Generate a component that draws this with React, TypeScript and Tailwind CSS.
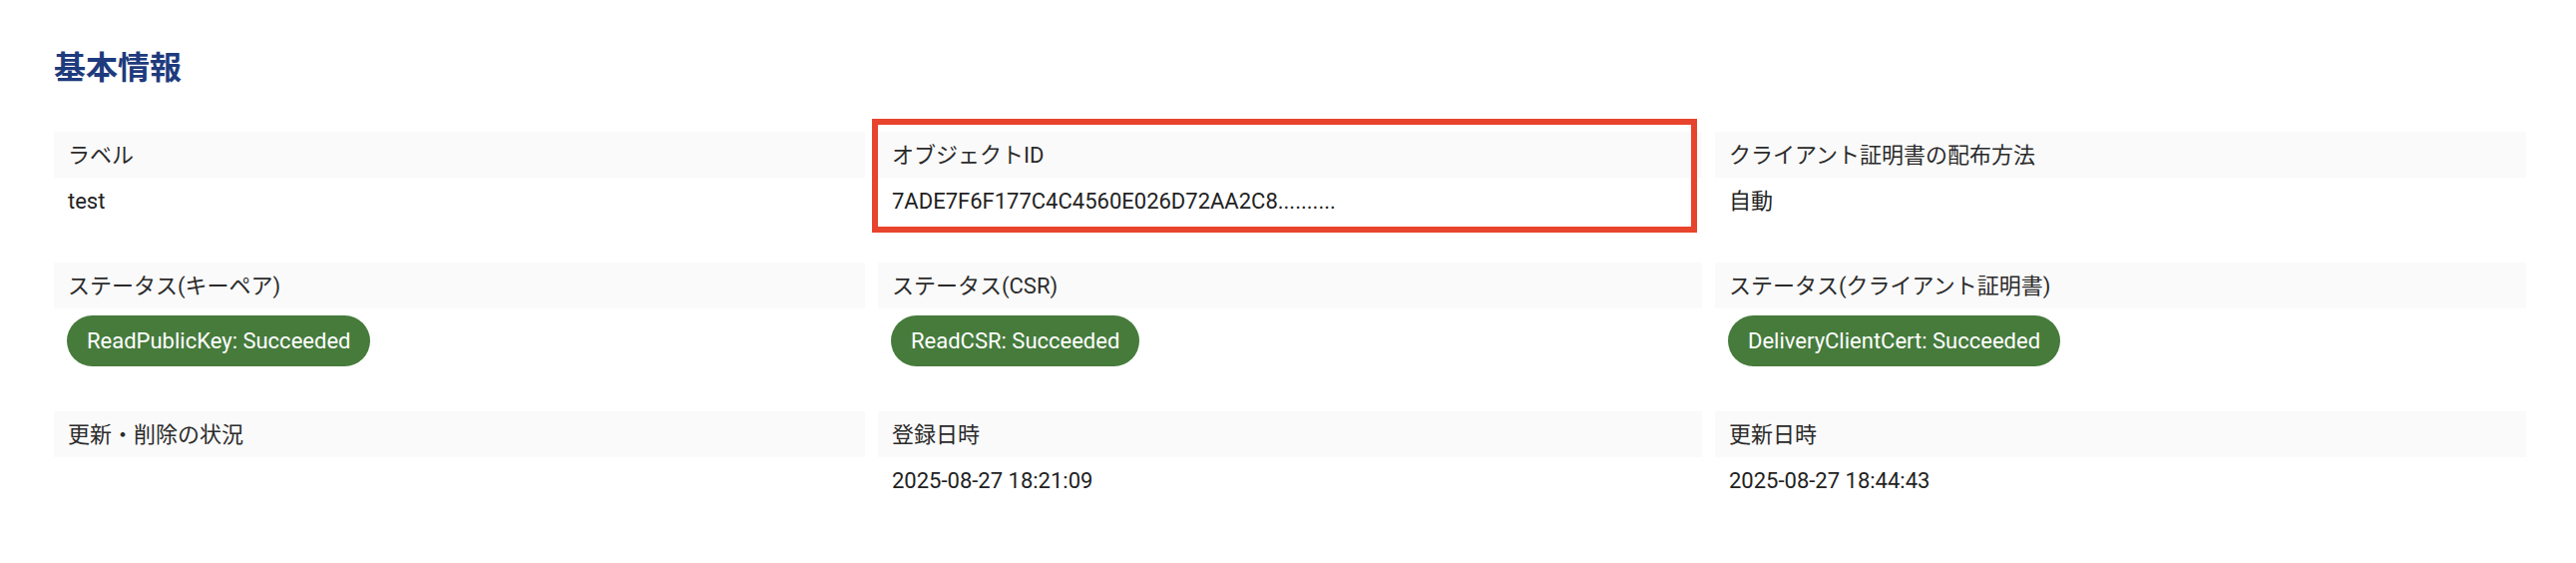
import React from 'react';

type Field = {
  label: string;
  value?: string;
  badge?: string;
  highlight?: boolean;
};

const fields: Field[] = [
  { label: 'ラベル', value: 'test' },
  { label: 'オブジェクトID', value: '7ADE7F6F177C4C4560E026D72AA2C8..........', highlight: true },
  { label: 'クライアント証明書の配布方法', value: '自動' },
  { label: 'ステータス(キーペア)', badge: 'ReadPublicKey: Succeeded' },
  { label: 'ステータス(CSR)', badge: 'ReadCSR: Succeeded' },
  { label: 'ステータス(クライアント証明書)', badge: 'DeliveryClientCert: Succeeded' },
  { label: '更新・削除の状況', value: '' },
  { label: '登録日時', value: '2025-08-27 18:21:09' },
  { label: '更新日時', value: '2025-08-27 18:44:43' },
];

const FieldItem: React.FC<{ field: Field }> = ({ field }) => (
  <div className="relative">
    <div className="flex h-[46px] items-center bg-[#fafafa] px-[14px] text-[22px] text-[#2b2b2b]">
      {field.label}
    </div>
    <div className="pt-[7px] px-[14px]">
      {field.badge ? (
        <span className="-ml-[1px] inline-flex h-[51px] items-center rounded-full bg-[#467b3c] px-[20px] text-[22px] text-white">
          {field.badge}
        </span>
      ) : (
        <div className="h-[33px] text-[22px] leading-[33px] text-[#222]">{field.value}</div>
      )}
    </div>
    {field.highlight && (
      <div className="pointer-events-none absolute -top-[13px] -left-[6px] right-[5px] -bottom-[15px] border-[6px] border-[#e8432d]" />
    )}
  </div>
);

export default function App() {
  return (
    <div
      className="min-h-[564px] w-full bg-white pl-[54px] pr-[50px] pt-[46px]"
      style={{ fontFamily: 'Roboto, "Noto Sans CJK JP", sans-serif' }}
    >
      <h1 className="h-[44px] text-[32px] font-bold leading-[44px] text-[#1e3b7d]">基本情報</h1>
      <div className="mt-[42px] grid grid-cols-[813fr_826fr_813fr] gap-x-[13px] gap-y-[45px]">
        {fields.map((f) => (
          <FieldItem key={f.label} field={f} />
        ))}
      </div>
    </div>
  );
}
